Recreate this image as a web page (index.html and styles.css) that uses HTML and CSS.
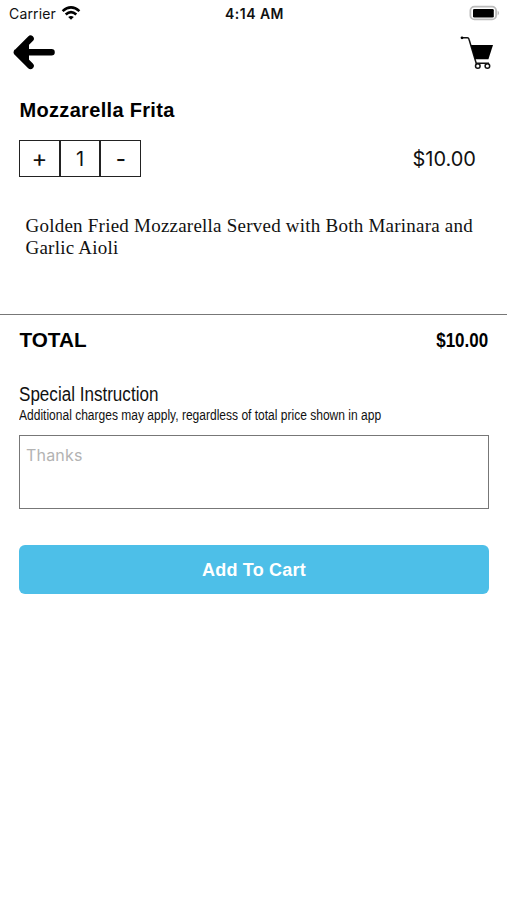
FILE: index.html
```html
<!DOCTYPE html>
<html lang="en">
<head>
<meta charset="utf-8">
<title>Mozzarella Frita</title>
<link rel="stylesheet" href="styles.css">
</head>
<body>
<div class="status">
  <div class="carrier"><span class="carrier-name">Carrier</span>
    <svg class="wifi" width="20" height="16" viewBox="0 0 20 16"><g fill="none" stroke="#000" stroke-width="2.6"><path d="M1.6 6.1Q10 -1.5 18.4 6.1"/><path d="M4.7 9.5Q10 4.6 15.3 9.5"/></g><path d="M7.2 12Q10 9.8 12.8 12L10 14.8Z"/></svg>
  </div>
  <span class="clock">4:14 AM</span>
  <svg class="battery" width="31" height="16" viewBox="0 0 31 16"><rect x="1.4" y="1.6" width="25.7" height="12.8" rx="4" fill="#fff" stroke="#bbb" stroke-width="1.8"/><rect x="4" y="3.9" width="20.8" height="8.6" rx="1.3"/><path d="M28.7 5.5Q31 8 28.7 10.5Z" fill="#aaa"/></svg>
</div>
<header class="nav">
  <svg class="back" width="44" height="36" viewBox="0 0 44 36"><path d="M5 18.3H39.5M18.5 4.7L5 18.3L18.5 31.8" fill="none" stroke="#000" stroke-width="6.6" stroke-linecap="round" stroke-linejoin="round"/><path d="M5 18.3L17 8V28.5Z"/></svg>
  <svg class="cart" width="34" height="36" viewBox="0 0 34 36"><path d="M1.8 3.7H7.4Q8.6 3.7 9 5.2L16.2 29.2H29" fill="none" stroke="#111" stroke-width="1.5"/><circle cx="2" cy="3.8" r="1.4"/><path d="M10.9 11H33L28.4 25.2H15Z"/><g fill="#fff" stroke="#111" stroke-width="1.5"><circle cx="17.8" cy="32" r="2.3"/><circle cx="27.4" cy="32" r="2.3"/></g></svg>
</header>
<main>
  <h1 class="name">Mozzarella Frita</h1>
  <div class="order">
    <div class="stepper"><button class="step plus">+</button><span class="step count">1</span><button class="step minus">-</button></div>
    <span class="price">$10.00</span>
  </div>
  <p class="description">Golden Fried Mozzarella Served with Both Marinara and<br>Garlic Aioli</p>
  <section class="total"><span class="total-label">TOTAL</span><span class="total-price">$10.00</span></section>
  <section class="instruction">
    <h2 class="heading">Special Instruction</h2>
    <p class="note">Additional charges may apply, regardless of total price shown in app</p>
    <div class="field">Thanks</div>
    <button class="add">Add To Cart</button>
  </section>
</main>
</body>
</html>
```
FILE: styles.css
```css
* { box-sizing: border-box; }
body { margin: 0; background: #fff; color: #111; font-family: Inter, "Liberation Sans", sans-serif; }
h1, h2, p { margin: 0; }
button { font: inherit; color: inherit; padding: 0; background: none; }
svg { display: block; }
.status { height: 28px; display: grid; grid-template-columns: 1fr auto 1fr; align-items: center; padding: 0 7px 0 9px; font-size: 14px; line-height: 28px; }
.carrier { display: flex; align-items: center; gap: 5px; letter-spacing: .15px; }
.wifi { margin-top: -2px; }
.clock { font-weight: 600; letter-spacing: .45px; }
.battery { justify-self: end; margin-top: -2px; }
.nav { height: 61px; display: flex; justify-content: space-between; padding: 6px 13px 0 12px; }
.name { padding-left: 19.5px; font: bold 20px/43px "Liberation Sans", Arial, sans-serif; letter-spacing: .32px; color: #000; }
.order { margin-top: 8px; height: 37px; padding: 0 31px 0 19px; display: flex; justify-content: space-between; align-items: center; }
.stepper { display: flex; height: 37px; }
.step { width: 40.7px; border: 1.5px solid #222; font-size: 20px; line-height: 35px; text-align: center; }
.plus { font-size: 24px; line-height: 36px; }
.count { padding-top: 1px; }
.minus { font-size: 22px; font-weight: 500; padding-top: 2px; line-height: 33px; }
.price { font-size: 20px; padding-top: 1px; }
.description { margin-top: 38px; height: 99px; padding-left: 25.5px; font: 19px/21.5px "Liberation Serif", "Times New Roman", serif; letter-spacing: .23px; white-space: nowrap; }
.total { height: 68px; border-top: 1px solid #777; padding: 10.5px 18.5px 0 19.5px; display: flex; justify-content: space-between; color: #000; }
.total-label { font: bold 20.7px/27px "Liberation Sans", Arial, sans-serif; }
.total-price { font: bold 20px/29px "Liberation Sans", sans-serif; transform: scaleX(.85); transform-origin: right; }
.instruction { padding: 0 18px 0 19px; font-family: "Liberation Sans", sans-serif; }
.heading { font-size: 20px; line-height: 25px; font-weight: normal; transform: scaleX(.853); transform-origin: left; }
.note { font-size: 14px; line-height: 17px; white-space: nowrap; transform: scaleX(.859); transform-origin: left; }
.field { margin-top: 11px; height: 74px; border: 1.5px solid #777; padding: 7px 6px; font: 16px/24px Inter, sans-serif; color: #b3b3b3; letter-spacing: .2px; }
.add { display: block; width: 100%; height: 49px; margin-top: 36px; border: 0; border-radius: 6px; background: #4dbfe8; color: #fff; font: bold 18px/50px "Liberation Sans", Arial, sans-serif; letter-spacing: .2px; }
```
